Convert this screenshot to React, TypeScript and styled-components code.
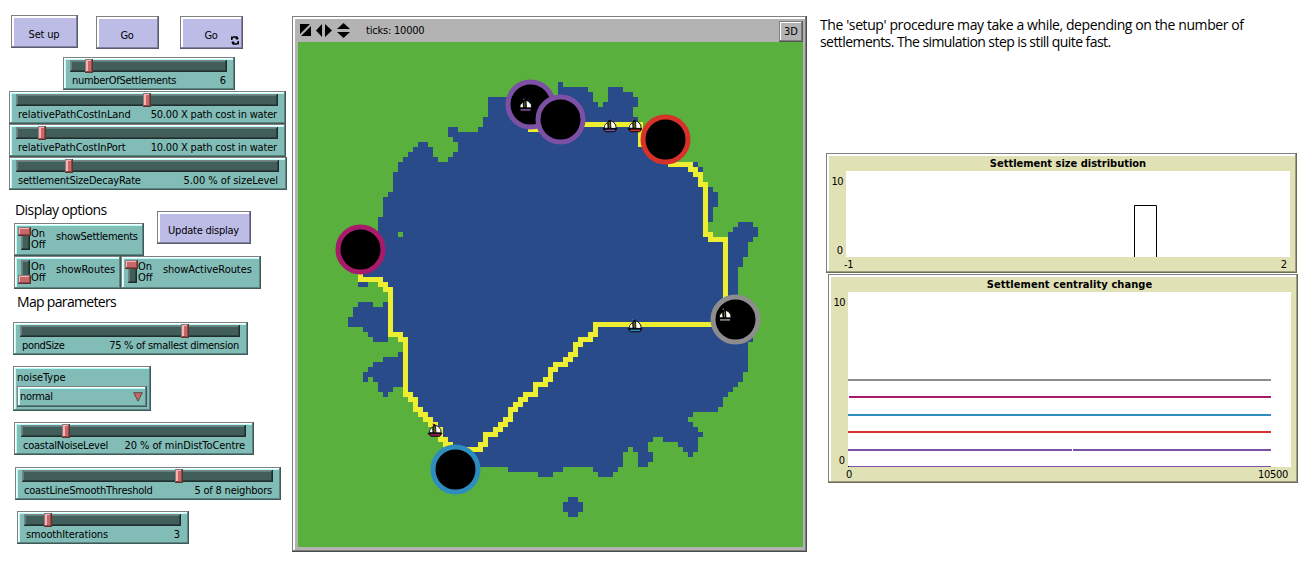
import React from 'react';
import styled, { createGlobalStyle, css } from 'styled-components';

const GlobalStyle = createGlobalStyle`
  * { box-sizing: border-box; }
  body { margin: 0; background: #fff; overflow: hidden; }
`;

const ui = '"DejaVu Sans Condensed", "DejaVu Sans", sans-serif';

const bevel = (near: string, dark: string, darker: string, thick = true) => css`
  box-shadow: inset -1px -1px 0 ${darker}, inset 1px 1px 0 #808080,
    inset -2px -2px 0 ${dark}, inset 2px 2px 0 #fff
    ${thick ? `, inset 3px 3px 0 ${near}` : ''};
`;

const Page = styled.main`
  display: flex;
  align-items: flex-start;
  width: 1307px;
  height: 561px;
  font: 11px/14px ${ui};
  color: #000;
`;

const Controls = styled.section`
  display: flex;
  flex-direction: column;
  align-items: flex-start;
  width: 292px;
  padding-top: 15px;
`;

const ButtonRow = styled.div`
  display: flex;
  align-items: flex-end;
  height: 34px;
  margin: 0 0 8px 11px;
`;

const Button = styled.button<{ $w: number; $gap?: number; $lift?: number }>`
  position: relative;
  width: ${p => p.$w}px;
  height: 33px;
  margin: 0 0 ${p => p.$lift ?? 0}px ${p => p.$gap ?? 0}px;
  padding: 6px 1px 0 0;
  border: 0;
  background: #bcbce6;
  font: 11px/14px ${ui};
  color: #000;
  ${bevel('#fff', '#8383a1', '#5b5b70')}
`;

const LoopIcon = styled.svg`
  position: absolute;
  right: 4px;
  bottom: 4px;
`;

const Text = styled.span<{ $track?: number }>`
  letter-spacing: ${p => p.$track ?? 0}px;
  white-space: nowrap;
`;

const TealPanel = styled.div<{ $w: number; $x: number; $top?: number }>`
  width: ${p => p.$w}px;
  height: 33px;
  margin: ${p => p.$top ?? 0}px 0 0 ${p => p.$x}px;
  background: #82bcb7;
  ${bevel('#b5fffb', '#5b8380', '#3f5b59')}
`;

const SliderPanel = styled(TealPanel)`
  padding: 3px 8px 0 7px;
`;

const Track = styled.div`
  position: relative;
  height: 12px;
  background: #415e5b;
  box-shadow: inset -1px -1px 0 #1f2d2c, inset 1px 1px 0 #808080,
    inset -2px -2px 0 #2d4140, inset 2px 2px 0 #5b8380;
`;

const Thumb = styled.i`
  position: absolute;
  top: -1px;
  width: 8px;
  height: 14px;
  background: #c86767;
  box-shadow: inset -1px -1px 0 #623232, inset 1px 1px 0 #808080,
    inset -2px -2px 0 #8c4848, inset 3px 2px 0 #ffb0b0;
`;

const SliderLabels = styled.div`
  display: flex;
  justify-content: space-between;
  padding: 2px 1px 0 2px;
`;

const Heading = styled.h2<{ $h: number; $x: number; $pad: number }>`
  height: ${p => p.$h}px;
  margin: 0 0 0 ${p => p.$x}px;
  padding-top: ${p => p.$pad}px;
  font: 400 14px/18px "Open Sans", "Noto Sans", sans-serif;
  letter-spacing: -0.56px;
`;

const MapHeading = styled(Heading)`
  letter-spacing: -0.68px;
`;

const DisplayGroup = styled.div`
  display: flex;
  align-items: flex-start;
`;

const DisplayColumn = styled.div`
  width: 157px;
`;

const UpdateSlot = styled.div`
  padding-top: 21px;
`;

const SwitchRow = styled.div`
  display: flex;
`;

const SwitchPanel = styled(TealPanel)`
  display: flex;
  padding: 3px 0 0 4px;
`;

const Slot = styled.div`
  position: relative;
  width: 9px;
  height: 23px;
  margin: 1px 1px 0 3px;
  background: #415e5b;
  box-shadow: inset -1px -1px 0 #1f2d2c, inset 1px 1px 0 #808080,
    inset -2px -2px 0 #2d4140, inset 2px 2px 0 #5b8380;
`;

const Lever = styled.i<{ $on: boolean }>`
  position: absolute;
  left: -3px;
  top: ${p => (p.$on ? 0 : 15)}px;
  width: 13px;
  height: 9px;
  background: #c86767;
  box-shadow: inset -1px -1px 0 #623232, inset 1px 1px 0 #808080,
    inset -2px -2px 0 #8c4848, inset 2px 2px 0 #ffb0b0;
`;

const OnOff = styled.div`
  width: 24px;
  line-height: 11px;
  padding-top: 2px;
`;

const SwitchName = styled.div`
  padding: 4px 0 0 1px;
`;

const ChooserPanel = styled(TealPanel)`
  height: 45px;
  padding: 5px 4px 0;
`;

const ChooserValue = styled.div`
  display: flex;
  justify-content: space-between;
  align-items: center;
  height: 21px;
  margin-top: 1px;
  padding: 0 4px 0 3px;
  ${bevel('#b5fffb', '#5b8380', '#3f5b59')}
`;

const World = styled.section`
  width: 515px;
  height: 536px;
  margin-top: 16px;
  padding: 3px 4px 5px 6px;
  background: #b3b3b3;
  box-shadow: inset -1px -1px 0 #4c4c4c, inset 1px 1px 0 #808080,
    inset -2px -2px 0 #7d7d7d, inset 3px 3px 0 #fff;
`;

const WorldBar = styled.div`
  display: flex;
  align-items: center;
  height: 23px;
  padding-left: 2px;
`;

const Ticks = styled.div`
  flex: 1;
  padding-left: 15px;
`;

const ThreeD = styled.button`
  width: 24px;
  height: 21px;
  margin-top: 1px;
  padding: 2px 0 0;
  border: 0;
  background: #b3b3b3;
  font: 11px/14px ${ui};
  color: #000;
  ${bevel('#fff', '#7d7d7d', '#575757', false)}
`;

const MapSvg = styled.svg`
  display: block;
`;

const Side = styled.section`
  width: 500px;
  padding-top: 16px;
`;

const Note = styled.p`
  display: flex;
  flex-direction: column;
  height: 137px;
  margin: 0 0 0 13px;
  font: 14px/17px "Open Sans", "Noto Sans", sans-serif;
`;

const PlotPanel = styled.div<{ $w: number; $h: number; $x: number; $top?: number }>`
  display: grid;
  grid-template: 18px 1fr 16px / 20px 1fr 7px;
  width: ${p => p.$w}px;
  height: ${p => p.$h}px;
  margin: ${p => p.$top ?? 0}px 0 0 ${p => p.$x}px;
  background: #e1e1b6;
  box-shadow: inset -1px -1px 0 #6c6c57, inset 1px 1px 0 #808080,
    inset -2px -2px 0 #9d9d7f, inset 3px 3px 0 #fff;
`;

const PlotTitle = styled.h3`
  grid-column: 2;
  margin: 0;
  padding-top: 4px;
  text-align: center;
  font: bold 11px/14px ${ui};
`;

const YAxis = styled.div`
  grid-row: 2;
  grid-column: 1;
  display: flex;
  flex-direction: column;
  justify-content: space-between;
  align-items: flex-end;
  padding: 4px 3px 0 0;
  margin-bottom: -1px;
`;

const Canvas = styled.svg`
  grid-row: 2;
  grid-column: 2;
  display: block;
  background: #fff;
`;

const XAxis = styled.div`
  grid-row: 3;
  grid-column: 2;
  display: flex;
  justify-content: space-between;
  padding: 1px 3px 0 0;
  margin-left: -2px;
`;

type SliderProps = {
  w: number; x: number; top?: number; name: string; value: string; at: number;
  nameTrack?: number; valueTrack?: number;
};

const Slider = ({ w, x, top, name, value, at, nameTrack, valueTrack }: SliderProps) => (
  <SliderPanel $w={w} $x={x} $top={top}>
    <Track><Thumb style={{ left: at }} /></Track>
    <SliderLabels>
      <Text $track={nameTrack}>{name}</Text>
      <Text $track={valueTrack}>{value}</Text>
    </SliderLabels>
  </SliderPanel>
);

const Switch = ({ w, x, name, on, track }: { w: number; x: number; name: string; on: boolean; track: number }) => (
  <SwitchPanel $w={w} $x={x}>
    <Slot><Lever $on={on} /></Slot>
    <OnOff>On<br />Off</OnOff>
    <SwitchName><Text $track={track}>{name}</Text></SwitchName>
  </SwitchPanel>
);

// Coordinates below are in patches; one patch is 5 pixels.
const pond =
  '38,11 52,11 52,8 53,8 53,9 58,9 58,10 59,10 59,12 60,12 60,13 61,13 61,12 62,12 62,9 65,9 65,10 67,10 67,11 68,11 68,13 67,13 67,15 68,15 68,18 75,18 75,24 80,24 80,25 81,25 81,28 82,28 82,29 83,29 83,30 84,30 84,33 83,33 83,36 82,36 82,38 83,38 83,39 86,39 86,38 87,38 87,37 88,37 88,36 91,36 91,37 92,37 92,39 91,39 91,40 90,40 90,43 89,43 89,45 88,45 88,53 91,53 91,60 90,60 90,66 89,66 89,68 88,68 88,69 87,69 87,70 86,70 86,71 85,71 85,73 84,73 84,74 79,74 79,75 78,75 78,76 79,76 79,77 80,77 80,78 81,78 81,79 80,79 80,82 79,82 79,83 78,83 78,82 77,82 77,81 76,81 76,80 73,80 73,79 71,79 71,80 70,80 70,82 71,82 71,84 70,84 70,85 68,85 68,82 67,82 67,81 66,81 66,82 65,82 65,85 64,85 64,86 63,86 63,87 60,87 60,86 59,86 59,85 53,85 53,86 51,86 51,87 48,87 48,86 42,86 42,85 31,85 31,81 29,81 29,80 28,80 28,78 27,78 27,77 26,77 26,76 25,76 25,75 24,75 24,74 23,74 23,72 22,72 22,71 21,71 21,69 19,69 19,70 18,70 18,71 17,71 17,70 16,70 16,68 15,68 15,67 14,67 14,68 13,68 13,66 14,66 14,65 15,65 15,64 17,64 17,63 20,63 20,62 21,62 21,60 20,60 20,59 18,59 18,60 15,60 15,59 14,59 14,58 13,58 13,57 10,57 10,55 11,55 11,53 12,53 12,52 15,52 15,53 17,53 17,52 18,52 18,50 17,50 17,49 16,49 16,48 14,48 14,49 12,49 12,41 16,41 16,35 17,35 17,31 18,31 18,30 19,30 19,26 20,26 20,24 21,24 21,23 22,23 22,22 23,22 23,21 24,21 24,20 26,20 26,21 27,21 27,23 28,23 28,24 30,24 30,23 31,23 31,22 32,22 32,20 31,20 31,19 30,19 30,17 32,17 32,18 36,18 36,17 37,17 37,15 38,15';

// Route cells as [column, row, width, height].
const route: number[][] = [
  [46, 17, 3, 1], [52, 16, 17, 1], [68, 17, 1, 4],
  [74, 24, 5, 1], [78, 25, 2, 1], [79, 26, 2, 1], [80, 27, 1, 1], [80, 28, 2, 1], [81, 29, 1, 9],
  [81, 38, 2, 1], [82, 39, 4, 1], [85, 39, 1, 14],
  [59, 56, 26, 1], [59, 57, 1, 1], [58, 58, 2, 1], [56, 59, 3, 1], [55, 60, 2, 1], [55, 61, 1, 1],
  [54, 62, 2, 1], [53, 63, 2, 1], [51, 64, 3, 1], [50, 65, 2, 1], [50, 66, 1, 1], [49, 67, 2, 1],
  [47, 68, 3, 1], [47, 69, 1, 1], [45, 70, 3, 1], [44, 71, 2, 1], [43, 72, 2, 1], [42, 73, 2, 1],
  [42, 74, 1, 1], [41, 75, 2, 1], [40, 76, 2, 1], [39, 77, 2, 1], [37, 78, 3, 1], [37, 79, 1, 1],
  [36, 80, 2, 1], [33, 81, 4, 1],
  [12, 45, 1, 2], [12, 47, 5, 1], [16, 48, 2, 1], [17, 49, 2, 1], [18, 50, 1, 8], [18, 58, 3, 1],
  [20, 59, 2, 1], [21, 60, 1, 10], [21, 70, 2, 1], [22, 71, 2, 1], [23, 72, 1, 1], [23, 73, 2, 1],
  [24, 74, 2, 1], [25, 75, 2, 1], [26, 76, 2, 1], [27, 77, 2, 1], [28, 78, 1, 1], [28, 79, 2, 1],
  [29, 80, 2, 1],
];

const settlements: [number, number, string][] = [
  [232.5, 62.5, '#7c50a4'], [262.5, 77.5, '#7c50a4'], [367.5, 97.5, '#d73229'],
  [62.5, 207.5, '#a71b6a'], [437.5, 277.5, '#8d8d8d'], [157.5, 427.5, '#2d8dbe'],
];

const boats: [number, number, string][] = [
  [304.5, 77, '#7c50a4'], [329.5, 77, '#d73229'], [329.5, 277, '#2d8dbe'], [129.5, 381.5, '#a71b6a'],
  [220, 56.5, '#7c50a4'], [419.5, 266.5, '#8d8d8d'],
];

const Boat = ({ x, y, hull }: { x: number; y: number; hull: string }) => (
  <g transform={`translate(${x} ${y})`}>
    <path d="M8 1.8 L10.8 3 L13.2 6 L13.6 9.4 H8.4 Z" fill="#fff" stroke="#000" strokeWidth="0.9" />
    <path d="M5 3.2 L2.2 6.6 L1.9 9.2 H5.5 Z" fill="#fff" stroke="#000" strokeWidth="0.8" />
    <path d="M6.7 0.6 V9.5" stroke="#000" strokeWidth="2" />
    <path d="M6.9 2.8 V8.8" stroke="#77742b" strokeWidth="1" />
    <path d="M0.5 9.7 H14.5 L12.3 12.8 H3.2 Z" fill="#000" stroke="#000" strokeWidth="0.8" />
    <path d="M2.6 11.4 H12.6" stroke={hull} strokeWidth="1.6" />
    <rect x="5" y="0.2" width="1.6" height="1" fill={hull} />
  </g>
);

const lines: [number, number, number, string][] = [
  [87, 2, 0, '#8d8d8d'], [104, 2, 1, '#a71b6a'], [122, 2, 0, '#2d8dbe'], [139, 2, 0, '#d73229'],
  [157, 2, 0, '#7c50a4'], [174, 1, 0, '#7c50a4'],
];

export default function App() {
  return (
    <Page>
      <GlobalStyle />
      <Controls>
        <ButtonRow>
          <Button $w={67} $lift={1}><Text $track={-0.2}>Set up</Text></Button>
          <Button $w={63} $gap={18}><Text $track={-0.3}>Go</Text></Button>
          <Button $w={63} $gap={21}>
            <Text $track={-0.3}>Go</Text>
            <LoopIcon width="8" height="9" viewBox="0 0 8 9">
              <path d="M0 0.5 H1.2 V1.2 L2 0.3 H6 L7 1.3 V2 H8 L6 4 L4 2 H5 V1.8 H2.5 L1.5 2.8 V4 H0Z" />
              <path d="M8 8.5 H6.8 V7.8 L6 8.7 H2 L1 7.7 V7 H0 L2 5 L4 7 H3 V7.2 H5.5 L6.5 6.2 V5 H8Z" />
            </LoopIcon>
          </Button>
        </ButtonRow>
        <Slider w={172} x={63} name="numberOfSettlements" value="6" at={15} nameTrack={-0.3} />
        <Slider w={277} x={9} top={1} name="relativePathCostInLand" value="50.00 X path cost in water" at={127} nameTrack={-0.07} valueTrack={-0.18} />
        <Slider w={277} x={9} name="relativePathCostInPort" value="10.00 X path cost in water" at={22} nameTrack={-0.1} valueTrack={-0.18} />
        <Slider w={278} x={9} name="settlementSizeDecayRate" value="5.00 % of sizeLevel" at={49} nameTrack={-0.22} valueTrack={-0.06} />

        <DisplayGroup>
          <DisplayColumn>
            <Heading $h={33} $x={15} $pad={11}>Display options</Heading>
            <Switch w={130} x={14} name="showSettlements" on track={-0.26} />
          </DisplayColumn>
          <UpdateSlot>
            <Button $w={94}><Text $track={-0.24}>Update display</Text></Button>
          </UpdateSlot>
        </DisplayGroup>
        <SwitchRow>
          <Switch w={107} x={14} name="showRoutes" on={false} track={-0.02} />
          <Switch w={140} x={0} name="showActiveRoutes" on track={-0.08} />
        </SwitchRow>
        <MapHeading $h={33} $x={17} $pad={4}>Map parameters</MapHeading>

        <Slider w={235} x={13} name="pondSize" value="75 % of smallest dimension" at={161} nameTrack={-0.35} valueTrack={-0.27} />
        <ChooserPanel $w={138} $x={13} $top={11}>
          <Text $track={-0.05}>noiseType</Text>
          <ChooserValue>
            <Text $track={-0.35}>normal</Text>
            <svg width="10" height="10" viewBox="0 0 10 10">
              <path d="M0.7 0.7 H9.3 L5 9.2Z" fill="#c86767" stroke="#5a4a4a" strokeWidth="1" />
            </svg>
          </ChooserValue>
        </ChooserPanel>
        <Slider w={240} x={14} top={11} name="coastalNoiseLevel" value="20 % of minDistToCentre" at={41} nameTrack={-0.23} valueTrack={-0.08} />
        <Slider w={266} x={15} top={12} name="coastLineSmoothThreshold" value="5 of 8 neighbors" at={153} nameTrack={-0.23} valueTrack={-0.2} />
        <Slider w={172} x={17} top={11} name="smoothIterations" value="3" at={20} nameTrack={-0.14} />
      </Controls>

      <World>
        <WorldBar>
          <svg width="51" height="15" viewBox="0 0 51 15">
            <path d="M0 1 H10 L0 11Z M11 3 V13 H1Z" />
            <path d="M22 1 V14 L16 7.5Z M25 1 V14 L32 7.5Z" />
            <path d="M37 6 L43.5 0 L50 6Z M37 9 L43.5 15 L50 9Z" />
          </svg>
          <Ticks><Text $track={-0.21}>ticks: 10000</Text></Ticks>
          <ThreeD>3D</ThreeD>
        </WorldBar>
        <MapSvg width="505" height="505" viewBox="0 0 505 505">
          <rect width="505" height="505" fill="#59b03c" />
          <g transform="scale(5)" shapeRendering="crispEdges">
            <polygon points={pond} fill="#294b89" />
            <path d="M54 91h2v1h1v2h-1v1h-2v-1h-1v-2h1z" fill="#294b89" />
            <rect x="20" y="38" width="1" height="1" fill="#59b03c" />
            {route.map(([x, y, w, h]) => (
              <rect key={`${x}-${y}-${w}`} x={x} y={y} width={w} height={h} fill="#eded31" />
            ))}
          </g>
          {settlements.map(([x, y, ring]) => (
            <circle key={`${x}-${y}`} cx={x} cy={y} r="22.5" fill="#000" stroke={ring} strokeWidth="5" />
          ))}
          {boats.map(([x, y, hull]) => <Boat key={`${x}-${y}`} x={x} y={y} hull={hull} />)}
        </MapSvg>
      </World>

      <Side>
        <Note>
          <Text $track={-0.4}>The 'setup' procedure may take a while, depending on the number of</Text>
          <Text $track={-0.57}>settlements. The simulation step is still quite fast.</Text>
        </Note>
        <PlotPanel $w={471} $h={120} $x={19}>
          <PlotTitle><Text>Settlement size distribution</Text></PlotTitle>
          <YAxis><Text $track={-0.5}>10</Text><Text>0</Text></YAxis>
          <Canvas width="444" height="86">
            <path d="M288.5 86 V34.5 H310.5 V86" fill="none" stroke="#000" />
          </Canvas>
          <XAxis><Text $track={-0.4}>-1</Text><Text>2</Text></XAxis>
        </PlotPanel>
        <PlotPanel $w={470} $h={209} $x={21} $top={1}>
          <PlotTitle><Text $track={0.08}>Settlement centrality change</Text></PlotTitle>
          <YAxis><Text $track={-0.5}>10</Text><Text>0</Text></YAxis>
          <Canvas width="443" height="175" shapeRendering="crispEdges">
            {lines.map(([y, h, x, c]) => <rect key={y} x={x} y={y} width={423 - x} height={h} fill={c} />)}
            <rect x="224" y="157" width="1" height="2" fill="#fff" />
            <rect x="0" y="174" width="1" height="1" fill="#000" />
          </Canvas>
          <XAxis><Text>0</Text><Text $track={-0.3}>10500</Text></XAxis>
        </PlotPanel>
      </Side>
    </Page>
  );
}
